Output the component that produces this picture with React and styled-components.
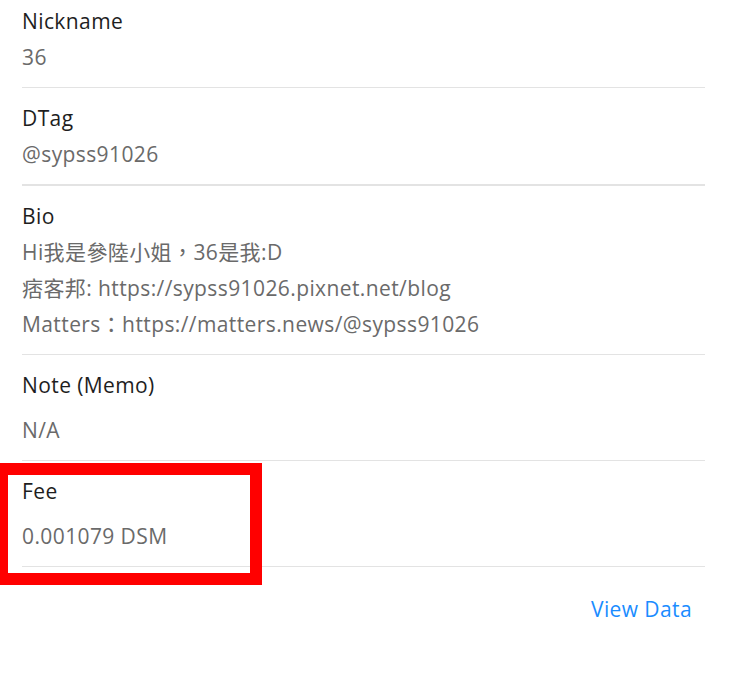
import styled, { createGlobalStyle } from "styled-components";

const GlobalStyle = createGlobalStyle`
  body {
    margin: 0;
    background: #fff;
    font-family: "Open Sans", "Noto Sans", "Noto Sans CJK TC", sans-serif;
  }
`;

const Page = styled.div`
  position: relative;
  width: 735px;
  height: 675px;
  padding: 0 30px 0 22px;
  box-sizing: border-box;
`;

const Section = styled.div`
  padding: ${props => (props.first ? "3px" : "12px")} 0 12px;
  border-bottom: ${props => (props.thick ? "2px" : "1px")} solid #e3e3e3;
`;

const Label = styled.div`
  font-size: 21px;
  letter-spacing: 0.4px;
  line-height: 36px;
  color: #1e1e1e;
`;

const Value = styled.div`
  font-size: 21px;
  letter-spacing: 0.4px;
  line-height: 36px;
  color: #6a6a6a;
  margin-top: ${props => (props.spaced ? "9px" : "0")};
  font-family: "Open Sans", "Noto Sans CJK TC", sans-serif;
  white-space: nowrap;
`;

const Footer = styled.div`
  display: flex;
  justify-content: flex-end;
  padding: 24px 13px 0 0;
`;

const Link = styled.a`
  font-size: 21px;
  letter-spacing: 0.4px;
  line-height: 36px;
  color: #1a8cff;
  text-decoration: none;
  cursor: pointer;
`;

const Highlight = styled.div`
  position: absolute;
  left: -4px;
  top: 463px;
  width: 266px;
  height: 122px;
  box-sizing: border-box;
  border: 12px solid #ff0000;
  pointer-events: none;
`;

export default function App() {
  return (
    <>
      <GlobalStyle />
      <Page>
        <Section first>
          <Label>Nickname</Label>
          <Value>36</Value>
        </Section>
        <Section thick>
          <Label>DTag</Label>
          <Value>@sypss91026</Value>
        </Section>
        <Section>
          <Label>Bio</Label>
          <Value>Hi我是參陸小姐，36是我:D</Value>
          <Value>痞客邦: https://sypss91026.pixnet.net/blog</Value>
          <Value>Matters：https://matters.news/@sypss91026</Value>
        </Section>
        <Section>
          <Label>Note (Memo)</Label>
          <Value spaced>N/A</Value>
        </Section>
        <Section>
          <Label>Fee</Label>
          <Value spaced>0.001079 DSM</Value>
        </Section>
        <Footer>
          <Link>View Data</Link>
        </Footer>
        <Highlight />
      </Page>
    </>
  );
}
